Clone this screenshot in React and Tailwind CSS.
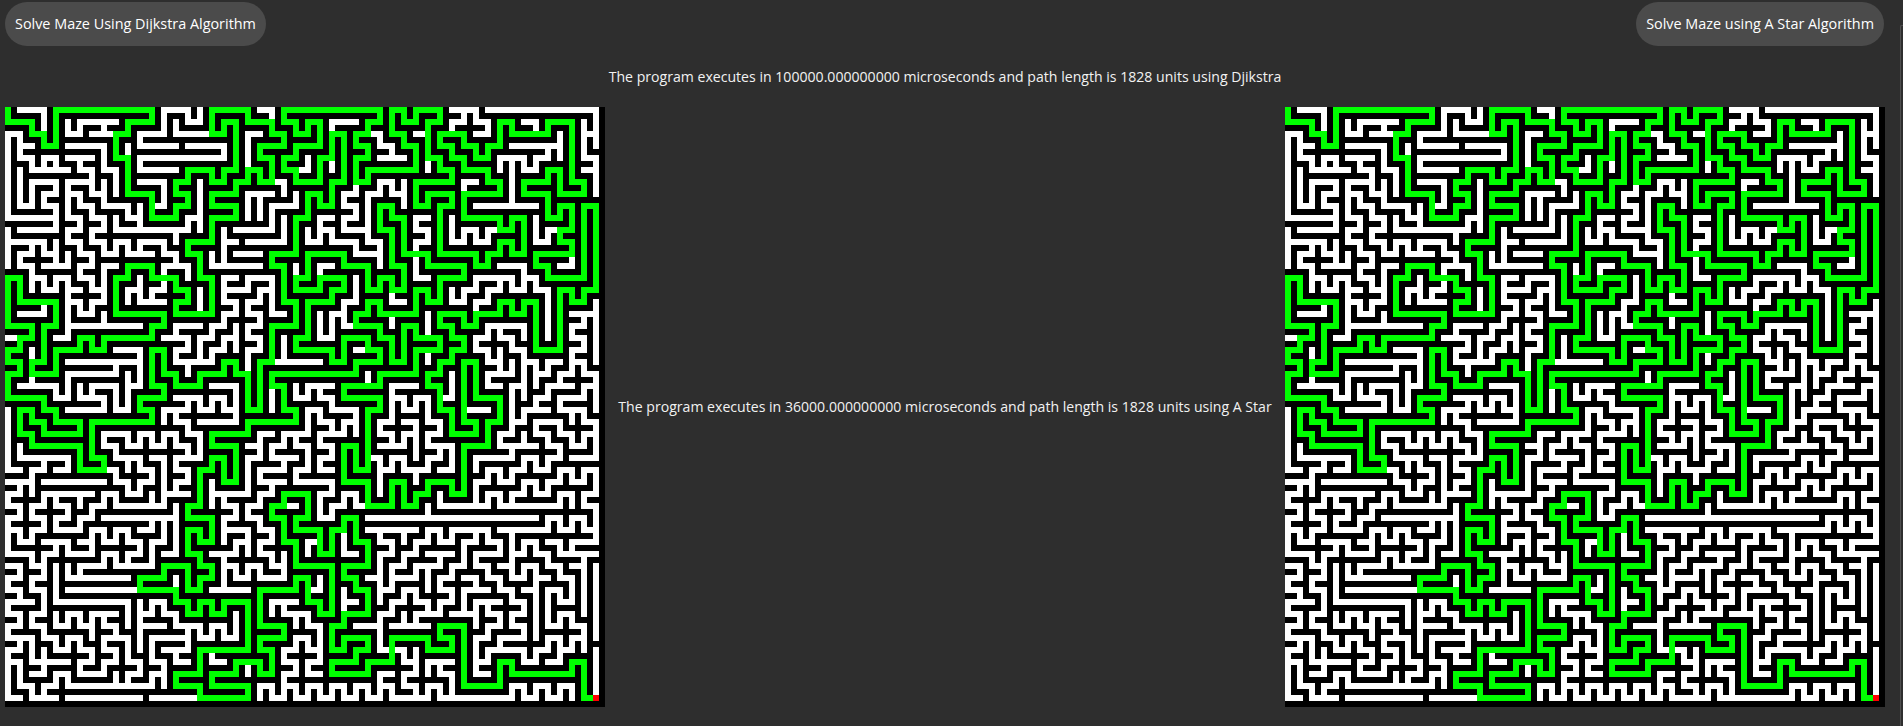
import { useMemo } from 'react'

// green route through the maze, as corner points on the 100x100 cell grid
const ROUTE = `0,0 0,2 4,2 4,4 6,4 6,6 8,6 8,0 24,0 24,2 20,2 20,4 18,4 18,8 20,8 20,14 24,14 24,18 28,18 28,16 30,16 30,14 28,14 28,12 30,12 30,10 34,10 34,12 36,12 36,10 38,10 38,2 36,2 36,4 34,4 34,0 40,0 40,2 44,2 44,4 46,4 46,6 42,6 42,8 44,8 44,12 42,12 42,10 40,10 40,12 38,12 38,14 34,14 34,16 38,16 38,18 34,18 34,22 30,22 30,24 32,24 32,28 34,28 34,34 28,34 28,32 30,32 30,30 28,30 28,28 24,28 24,26 20,26 20,28 18,28 18,34 26,34 26,36 24,36 24,38 16,38 16,40 14,40 14,38 12,38 12,40 8,40 8,44 4,44 4,42 6,42 6,36 8,36 8,32 2,32 2,28 0,28 0,36 4,36 4,38 2,38 2,40 0,40 0,42 2,42 2,44 0,44 0,48 6,48 6,50 8,50 8,52 12,52 12,54 6,54 6,52 4,52 4,50 2,50 2,54 4,54 4,56 12,56 12,60 16,60 16,58 14,58 14,52 24,52 24,50 22,50 22,48 26,48 26,46 24,46 24,40 26,40 26,44 28,44 28,46 32,46 32,44 36,44 36,42 38,42 38,44 40,44 40,50 42,50 42,42 44,42 44,36 48,36 48,32 46,32 46,26 44,26 44,24 48,24 48,18 50,18 50,14 52,14 52,16 54,16 54,12 56,12 56,4 54,4 54,8 52,8 52,12 48,12 48,10 46,10 46,8 48,8 48,6 52,6 52,2 50,2 50,4 48,4 48,2 46,2 46,0 62,0 62,2 60,2 60,4 58,4 58,6 60,6 60,8 58,8 58,12 60,12 60,10 68,10 68,6 66,6 66,4 64,4 64,0 66,0 66,2 68,2 68,0 72,0 72,2 70,2 70,8 72,8 72,10 74,10 74,12 68,12 68,16 70,16 70,14 74,14 74,16 72,16 72,24 78,24 78,26 80,26 80,24 82,24 82,22 84,22 84,24 86,24 86,18 84,18 84,20 82,20 82,18 76,18 76,14 82,14 82,12 80,12 80,10 76,10 76,8 74,8 74,6 72,6 72,4 76,4 76,6 78,6 78,8 80,8 80,6 82,6 82,2 84,2 84,4 90,4 90,2 94,2 94,12 96,12 96,14 92,14 92,10 90,10 90,12 86,12 86,14 90,14 90,18 92,18 92,16 94,16 94,20 92,20 92,22 94,22 94,24 88,24 88,26 90,26 90,28 96,28 96,16 98,16 98,30 96,30 96,32 94,32 94,30 92,30 92,40 88,40 88,32 86,32 86,34 84,34 84,32 82,32 82,34 78,34 78,36 76,36 76,34 72,34 72,36 74,36 74,38 76,38 76,40 74,40 74,42 72,42 72,44 70,44 70,46 72,46 72,50 74,50 74,54 78,54 78,52 76,52 76,42 78,42 78,48 82,48 82,52 80,52 80,56 76,56 76,64 74,64 74,62 70,62 70,64 68,64 68,66 66,66 66,62 64,62 64,66 60,66 60,62 56,62 56,56 58,56 58,60 60,60 60,50 62,50 62,48 56,48 56,46 62,46 62,44 68,44 68,40 72,40 72,38 68,38 68,36 66,36 66,42 64,42 64,38 62,38 62,36 58,36 58,34 60,34 60,32 62,32 62,34 68,34 68,30 70,30 70,32 72,32 72,28 76,28 76,26 70,26 70,24 66,24 66,18 64,18 64,16 62,16 62,20 64,20 64,26 66,26 66,30 64,30 64,28 62,28 62,30 60,30 60,26 56,26 56,24 50,24 50,28 48,28 48,30 52,30 52,28 56,28 56,30 54,30 54,32 50,32 50,38 48,38 48,40 54,40 54,42 56,42 56,38 60,38 60,40 62,40 62,42 58,42 58,44 44,44 44,46 46,46 46,50 48,50 48,52 40,52 40,54 34,54 34,56 38,56 38,62 36,62 36,58 34,58 34,60 32,60 32,66 30,66 30,68 34,68 34,72 32,72 32,70 30,70 30,74 32,74 32,76 34,76 34,78 32,78 32,80 30,80 30,76 26,76 26,78 22,78 22,80 28,80 28,82 30,82 30,84 32,84 32,82 34,82 34,84 36,84 36,82 40,82 40,90 32,90 32,94 28,94 28,96 32,96 32,98 40,98 40,96 34,96 34,94 38,94 38,92 42,92 42,94 44,94 44,90 42,90 42,88 46,88 46,86 42,86 42,80 48,80 48,78 50,78 50,82 52,82 52,84 54,84 54,76 48,76 48,72 46,72 46,68 44,68 44,66 46,66 46,64 50,64 50,68 48,68 48,70 52,70 52,74 54,74 54,70 56,70 56,68 58,68 58,72 60,72 60,76 56,76 56,78 58,78 58,80 60,80 60,84 56,84 56,86 54,86 54,90 56,90 56,88 60,88 60,90 58,90 58,92 54,92 54,94 60,94 60,92 64,92 64,88 70,88 70,90 74,90 74,88 72,88 72,86 76,86 76,96 82,96 82,92 84,92 84,94 94,94 94,92 96,92 96,98 97,98`

// the longer white corridors read off the picture, same notation
const CORRIDORS = [
    '2,0 6,0 6,4', '2,4 0,4 0,18 8,18', '8,16 8,20 2,20', '2,10 2,16 4,16 4,12 8,12 8,14 6,14 6,16 8,16',
    '2,4 2,8 4,8 4,10 10,10', '2,6 4,6', '6,8 8,8 8,10', '6,8 6,10',
    '10,2 10,4 12,4 12,2 18,2', '16,2 16,4', '14,4 18,4', '10,6 16,6 16,10 18,10 18,14',
    '26,0 30,0 30,2 32,2 32,0', '26,0 26,4 22,4 22,6 28,6', '28,2 28,4 34,4',
    '22,8 36,8 36,6 30,6', '22,8 22,10 28,10', '40,10 40,4 42,4',
    '40,14 44,14', '40,14 40,18', '42,14 42,18', '44,16 48,16 48,14', '44,16 44,20 38,20', '46,18 46,22 40,22',
    '38,24 42,24', '34,24 34,26 42,26', '36,20 36,26',
    '0,50 0,60 2,60', '10,50 15,50', '6,62 16,62', '8,76 8,82 20,82 20,86', '10,80 22,80',
    '10,98 22,98', '24,98 32,98', '16,68 23,68',
    '80,0 98,0 98,6', '78,16 88,16', '98,76 98,88', '98,90 98,97', '60,68 88,68', '70,66 70,68',
]

const toPoints = (line) => line.split(' ').map((p) => p.split(',').map(Number))

// walks a corner list and returns the cells it passes over
function cellsOf(points) {
    const cells = [points[0]]
    for (let i = 1; i < points.length; i++) {
        let [x, y] = points[i - 1]
        const [tx, ty] = points[i]
        while (x !== tx || y !== ty) {
            x += Math.sign(tx - x)
            y += Math.sign(ty - y)
            cells.push([x, y])
        }
    }
    return cells
}

const square = ([x, y]) => `M${x} ${y}h1v1h-1z`
const routeCells = cellsOf(toPoints(ROUTE))

// what the picture doesn't pin down is grown as a winding corridor from the known parts
function buildWhiteCells() {
    const open = new Map()
    const mark = ([x, y]) => open.set(x * 100 + y, [x, y])
    routeCells.forEach(mark)
    CORRIDORS.forEach((line) => cellsOf(toPoints(line)).forEach(mark))

    let seed = 48271
    const rand = (n) => {
        seed = (seed * 1103515245 + 12345) % 2147483648
        return (seed >> 8) % n
    }

    const stack = [...open.values()].filter(([x, y]) => x % 2 === 0 && y % 2 === 0)
    for (let i = stack.length - 1; i > 0; i--) {
        const j = rand(i + 1)
        const tmp = stack[i]
        stack[i] = stack[j]
        stack[j] = tmp
    }

    let last = [0, 0]
    while (stack.length) {
        const [x, y] = stack[stack.length - 1]
        const free = [[2, 0], [-2, 0], [0, 2], [0, -2]].filter(([dx, dy]) => {
            const nx = x + dx
            const ny = y + dy
            return nx >= 0 && ny >= 0 && nx <= 98 && ny <= 98 && !open.has(nx * 100 + ny)
        })
        if (!free.length) {
            stack.pop()
            continue
        }
        // the reference turns a lot, so going straight on is the exception
        const turns = free.filter(([dx, dy]) => dx !== last[0] || dy !== last[1])
        const options = turns.length && rand(5) > 0 ? turns : free
        const [dx, dy] = options[rand(options.length)]
        last = [dx, dy]
        mark([x + dx / 2, y + dy / 2])
        mark([x + dx, y + dy])
        stack.push([x + dx, y + dy])
    }

    return [...open.values()].map(square).join('')
}

function Maze() {
    const white = useMemo(buildWhiteCells, [])
    const green = useMemo(() => routeCells.map(square).join(''), [])

    return (
        <svg width="600" height="600" viewBox="0 0 100 100" shapeRendering="crispEdges" className="shrink-0 bg-black">
            <path d={white} fill="#ffffff" />
            <path d={green} fill="#00ff00" />
            <rect x="98" y="98" width="1" height="1" fill="#ff0000" />
        </svg>
    )
}

function PillButton({ children }) {
    return (
        <button className="h-11 rounded-full bg-[#4b4b4b] px-[10px] text-[14.4px] text-white">
            {children}
        </button>
    )
}

function App() {
    return (
        <div className="relative flex h-[726px] w-full flex-col overflow-hidden bg-[#2e2e2e] font-['Open_Sans','Liberation_Sans',sans-serif]">
            <div className="flex justify-between pt-[2px] pl-[5px] pr-[19px]">
                <PillButton>Solve Maze Using Dijkstra Algorithm</PillButton>
                <PillButton>Solve Maze using A Star Algorithm</PillButton>
            </div>
            <p className="mt-[21px] h-[40px] w-[1890px] text-center text-[14.1px] leading-5 text-[#f2f2f2]">
                The program executes in 100000.000000000 microseconds and path length is 1828 units using Djikstra
            </p>
            <div className="flex items-center pl-[5px] pr-[18px]">
                <Maze />
                <p className="flex-1 text-center text-[14.1px] text-[#f2f2f2]">
                    The program executes in 36000.000000000 microseconds and path length is 1828 units using A Star
                </p>
                <Maze />
            </div>
            <div className="absolute top-[25px] right-0 bottom-0 w-[3px] rounded-tl-[2px] border-t border-l border-[#4f4f4f]" />
        </div>
    )
}

export default App
